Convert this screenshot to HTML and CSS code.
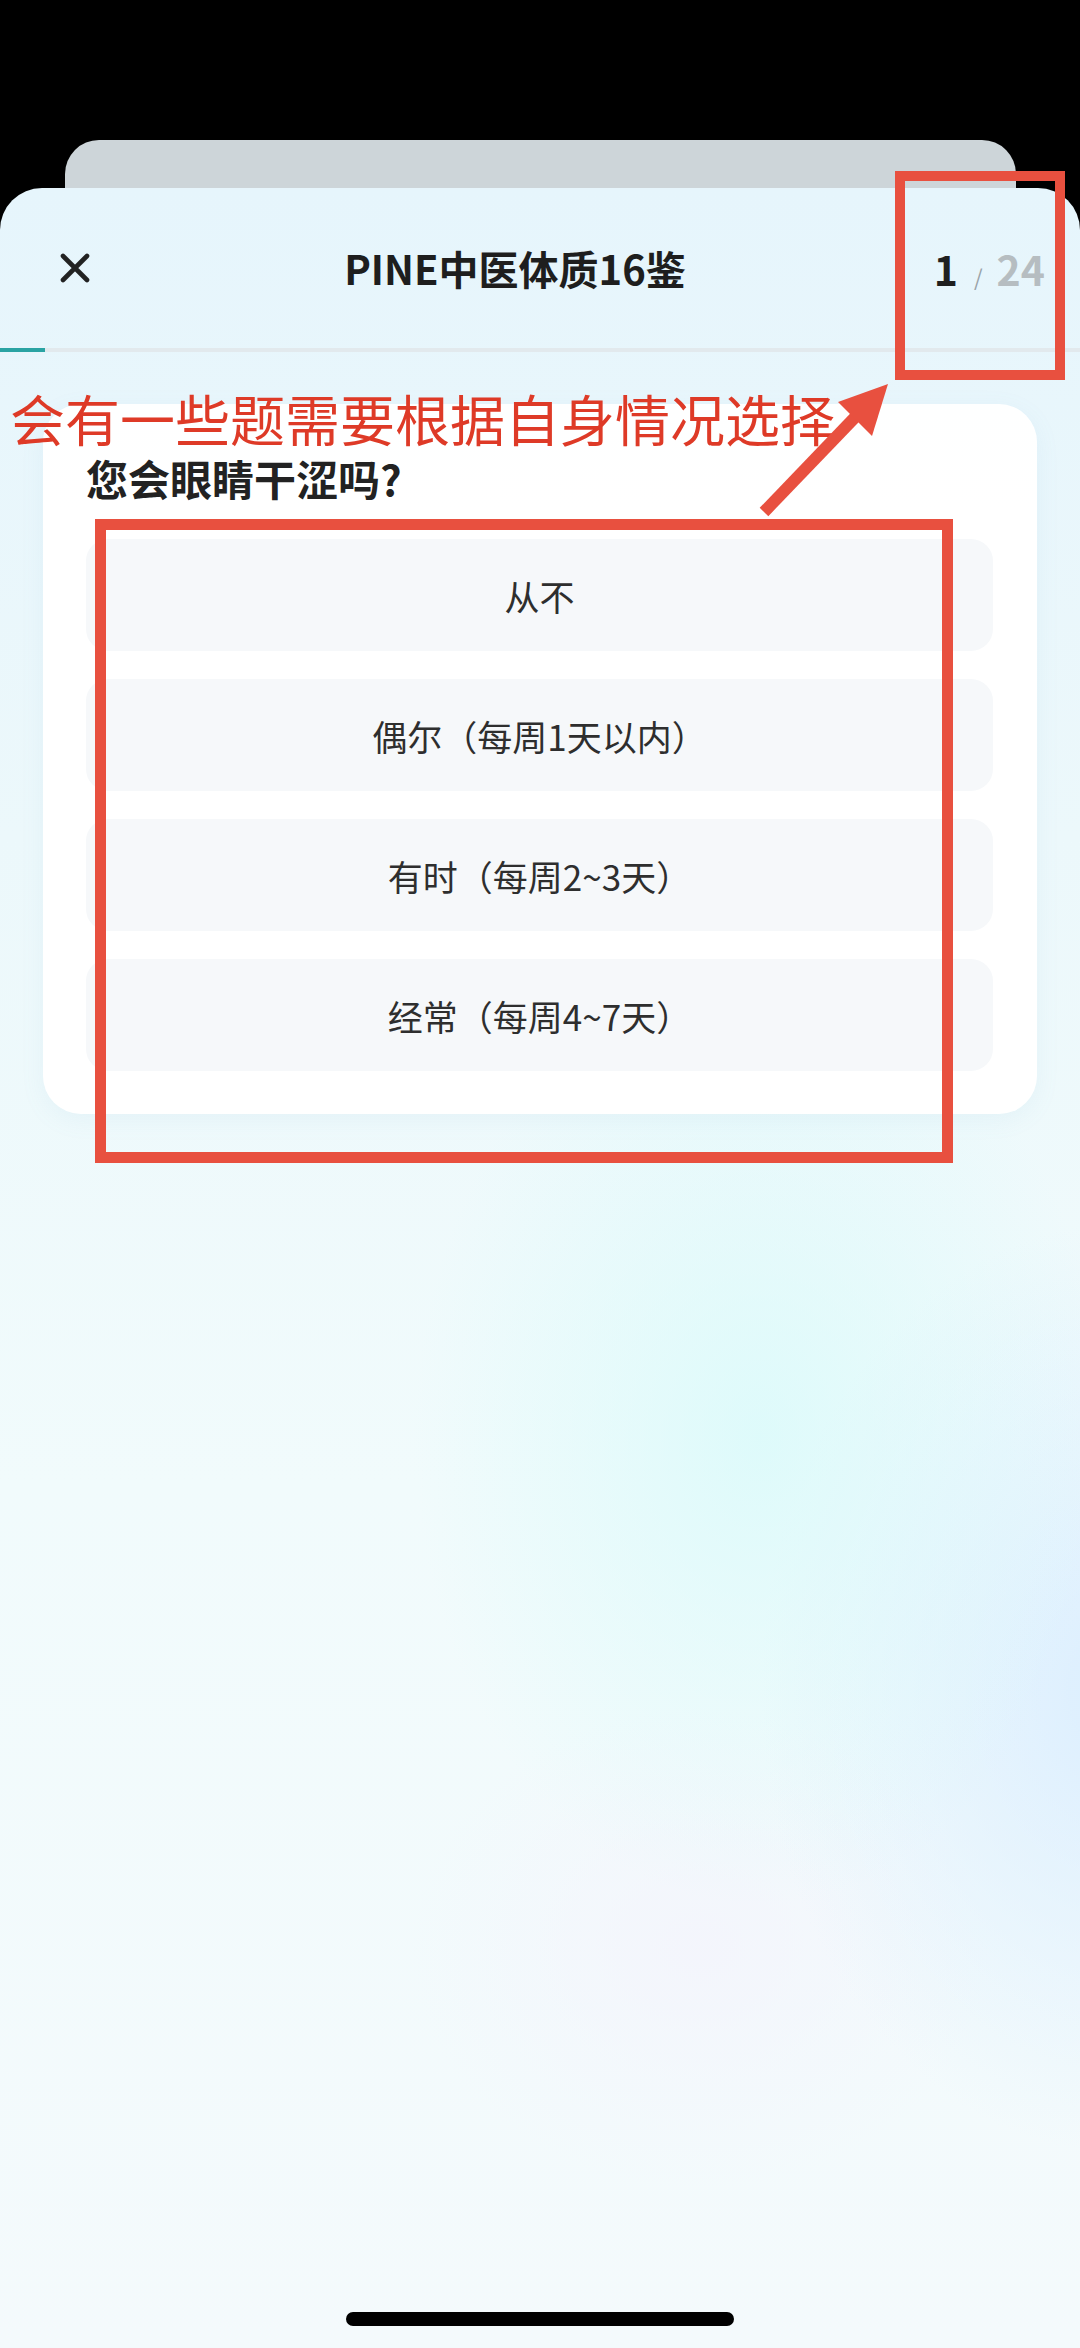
FILE: index.html
```
<!DOCTYPE html>
<html lang="zh-CN">
<head>
<meta charset="utf-8">
<title>PINE中医体质16鉴</title>
<link rel="stylesheet" href="styles.css">
</head>
<body>
<div class="screen">
  <div class="back-card"></div>
  <div class="sheet">
    <header class="header">
      <div class="close-box">
        <svg class="close-icon" width="30" height="30" viewBox="0 0 30 30">
          <path d="M3 3 L27 27 M27 3 L3 27" stroke="#222" stroke-width="4.6" stroke-linecap="round" fill="none"/>
        </svg>
      </div>
      <h1 class="title">PINE中医体质16鉴</h1>
      <div class="counter">
        <span class="cur">1</span><span class="slash">/</span><span class="total">24</span>
      </div>
    </header>
    <div class="progress"><div class="progress-fill"></div></div>
    <section class="card">
      <h2 class="question">您会眼睛干涩吗?</h2>
      <div class="options">
        <div class="option">从不</div>
        <div class="option">偶尔（每周1天以内）</div>
        <div class="option">有时（每周2~3天）</div>
        <div class="option">经常（每周4~7天）</div>
      </div>
    </section>
  </div>

  <div class="note">会有一些题需要根据自身情况选择</div>
  <div class="mark mark-counter"></div>
  <div class="mark mark-options"></div>
  <svg class="arrow" width="1080" height="600" viewBox="0 0 1080 600">
    <line x1="764" y1="512" x2="862" y2="410" stroke="#e8503f" stroke-width="12" stroke-linecap="butt"/>
    <polygon points="888,384 838,402 872,436" fill="#e8503f"/>
  </svg>
  <div class="home-bar"></div>
</div>
</body>
</html>
```
FILE: styles.css
```
* {
  box-sizing: border-box;
}

html, body {
  margin: 0;
  padding: 0;
  background: #000;
}

body {
  font-family: "Noto Sans CJK SC", "Noto Sans", sans-serif;
  color: #222;
}

.screen {
  position: relative;
  width: 1080px;
  height: 2348px;
  overflow: hidden;
  background: #000;
  padding-top: 140px;
}

.back-card {
  margin-left: 65px;
  width: 951px;
  height: 48px;
  background: #cdd5d9;
  border-radius: 34px 34px 0 0;
}

.sheet {
  height: 2160px;
  border-radius: 42px 42px 0 0;
  background:
    radial-gradient(ellipse 480px 650px at 760px 1250px, rgba(214, 250, 250, 0.7), rgba(214, 250, 250, 0) 72%),
    radial-gradient(ellipse 480px 620px at 1120px 1500px, rgba(216, 236, 255, 0.85), rgba(216, 236, 255, 0) 75%),
    radial-gradient(ellipse 360px 300px at 700px 1760px, rgba(244, 244, 252, 0.8), rgba(244, 244, 252, 0) 80%),
    linear-gradient(180deg, #e6f5fc 0%, #ecf8fb 30%, #f1fbfc 60%, #f4fafc 100%);
  display: flex;
  flex-direction: column;
}

.header {
  height: 160px;
  display: flex;
  align-items: center;
}

.close-box {
  width: 150px;
  display: flex;
  justify-content: center;
  align-items: center;
}

.close-icon {
  display: block;
}

.title {
  flex: 1;
  margin: 0;
  text-align: center;
  font-size: 40px;
  font-weight: 700;
  color: #1e1e1e;
}

.counter {
  width: 200px;
  display: flex;
  justify-content: flex-end;
  align-items: baseline;
  padding-right: 35px;
  font-weight: 700;
}

.cur {
  font-size: 41px;
  color: #1f1f1f;
}

.slash {
  font-size: 22px;
  font-weight: 400;
  color: #9aa3a8;
  margin: 0 14px 0 16px;
}

.total {
  font-size: 41px;
  color: #b6bdc1;
}

.progress {
  height: 4px;
  background: #e2e9ed;
}

.progress-fill {
  width: 45px;
  height: 4px;
  background: #2aa3a3;
}

.card {
  margin: 52px 43px 0 43px;
  padding: 46px 44px 43px 43px;
  background: rgba(255, 255, 255, 0.96);
  border-radius: 38px;
  box-shadow: 0 6px 24px rgba(120, 170, 200, 0.08);
}

.question {
  margin: 0 0 33px 0;
  font-size: 42px;
  line-height: 56px;
  font-weight: 700;
  color: #222;
}

.options {
  display: flex;
  flex-direction: column;
  gap: 28px;
}

.option {
  height: 112px;
  border-radius: 22px;
  background: #f6f8fa;
  display: flex;
  align-items: center;
  justify-content: center;
  font-size: 35px;
  color: #2e2e2e;
}

.note {
  position: absolute;
  left: 10px;
  top: 388px;
  font-size: 55px;
  line-height: 58px;
  color: #de3a27;
  white-space: nowrap;
}

.mark {
  position: absolute;
  border: 10px solid #e8503f;
}

.mark-counter {
  left: 895px;
  top: 171px;
  width: 170px;
  height: 209px;
}

.mark-options {
  left: 95px;
  top: 519px;
  width: 858px;
  height: 644px;
  border-width: 11px;
}

.arrow {
  position: absolute;
  left: 0;
  top: 0;
}

.home-bar {
  position: absolute;
  left: 346px;
  top: 2312px;
  width: 388px;
  height: 14px;
  border-radius: 7px;
  background: #000;
}
```
